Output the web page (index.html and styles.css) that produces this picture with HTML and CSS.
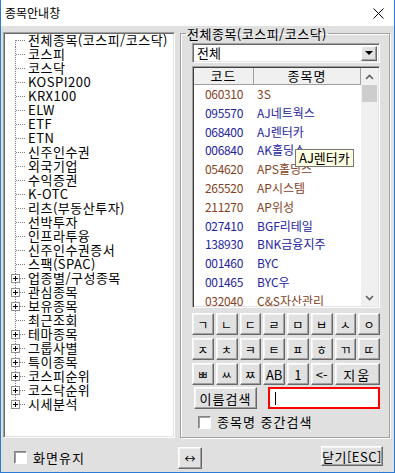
FILE: index.html
```html
<!DOCTYPE html>
<html lang="ko">
<head>
  <meta charset="UTF-8" />
  <title>종목안내창</title>
  <link rel="stylesheet" href="styles.css">
</head>
<body>
  <div class="window">
    <div class="titlebar">
      <span class="title">종목안내창</span>
      <svg class="close-x" width="11" height="11" viewBox="0 0 11 11">
        <path d="M0.5 0.5L10.5 10.5M10.5 0.5L0.5 10.5" stroke="#000" stroke-width="1" fill="none"/>
      </svg>
    </div>

    <div class="main">
      <ul class="tree">
        <li class="first"><span class="gutter"></span>전체종목(코스피/코스닥)</li>
        <li><span class="gutter"></span>코스피</li>
        <li><span class="gutter"></span>코스닥</li>
        <li><span class="gutter"></span>KOSPI200</li>
        <li><span class="gutter"></span>KRX100</li>
        <li><span class="gutter"></span>ELW</li>
        <li><span class="gutter"></span>ETF</li>
        <li><span class="gutter"></span>ETN</li>
        <li><span class="gutter"></span>신주인수권</li>
        <li><span class="gutter"></span>외국기업</li>
        <li><span class="gutter"></span>수익증권</li>
        <li><span class="gutter"></span>K-OTC</li>
        <li><span class="gutter"></span>리츠(부동산투자)</li>
        <li><span class="gutter"></span>선박투자</li>
        <li><span class="gutter"></span>인프라투융</li>
        <li><span class="gutter"></span>신주인수권증서</li>
        <li><span class="gutter"></span>스팩(SPAC)</li>
        <li><span class="gutter"><span class="plus"></span></span>업종별/구성종목</li>
        <li><span class="gutter"><span class="plus"></span></span>관심종목</li>
        <li><span class="gutter"><span class="plus"></span></span>보유종목</li>
        <li><span class="gutter"></span>최근조회</li>
        <li><span class="gutter"><span class="plus"></span></span>테마종목</li>
        <li><span class="gutter"><span class="plus"></span></span>그룹사별</li>
        <li><span class="gutter"><span class="plus"></span></span>특이종목</li>
        <li><span class="gutter"><span class="plus"></span></span>코스피순위</li>
        <li><span class="gutter"><span class="plus"></span></span>코스닥순위</li>
        <li class="last"><span class="gutter"><span class="plus"></span></span>시세분석</li>
      </ul>

      <fieldset class="group">
        <legend>전체종목(코스피/코스닥)</legend>

        <div class="combo">
          <span class="combo-text">전체</span>
          <span class="drop"><span class="tri"></span></span>
        </div>

        <div class="list">
          <div class="grid">
            <div class="head"><span class="col-code">코드</span><span class="col-name">종목명</span></div>
            <div class="rows">
              <div class="row brown"><span class="col-code">060310</span><span class="col-name">3S</span></div>
              <div class="row blue"><span class="col-code">095570</span><span class="col-name">AJ네트웍스</span></div>
              <div class="row blue"><span class="col-code">068400</span><span class="col-name">AJ렌터카</span></div>
              <div class="row blue"><span class="col-code">006840</span><span class="col-name">AK홀딩스</span></div>
              <div class="row brown"><span class="col-code">054620</span><span class="col-name">APS홀딩스</span></div>
              <div class="row brown"><span class="col-code">265520</span><span class="col-name">AP시스템</span></div>
              <div class="row brown"><span class="col-code">211270</span><span class="col-name">AP위성</span></div>
              <div class="row blue"><span class="col-code">027410</span><span class="col-name">BGF리테일</span></div>
              <div class="row blue"><span class="col-code">138930</span><span class="col-name">BNK금융지주</span></div>
              <div class="row blue"><span class="col-code">001460</span><span class="col-name">BYC</span></div>
              <div class="row blue"><span class="col-code">001465</span><span class="col-name">BYC우</span></div>
              <div class="row brown"><span class="col-code">032040</span><span class="col-name">C&amp;S자산관리</span></div>
            </div>
          </div>
          <div class="scrollbar">
            <div class="sb-btn">
              <svg width="9" height="6" viewBox="0 0 9 6"><path d="M1 5L4.5 1.5L8 5" stroke="#606060" stroke-width="1.6" fill="none"/></svg>
            </div>
            <div class="sb-thumb"></div>
            <div class="sb-track"></div>
            <div class="sb-btn">
              <svg width="9" height="6" viewBox="0 0 9 6"><path d="M1 1L4.5 4.5L8 1" stroke="#606060" stroke-width="1.6" fill="none"/></svg>
            </div>
          </div>
          <div class="tooltip">AJ렌터카</div>
        </div>

        <div class="keys">
          <button class="key">ㄱ</button>
          <button class="key">ㄴ</button>
          <button class="key">ㄷ</button>
          <button class="key">ㄹ</button>
          <button class="key">ㅁ</button>
          <button class="key">ㅂ</button>
          <button class="key">ㅅ</button>
          <button class="key">ㅇ</button>
          <button class="key">ㅈ</button>
          <button class="key">ㅊ</button>
          <button class="key">ㅋ</button>
          <button class="key">ㅌ</button>
          <button class="key">ㅍ</button>
          <button class="key">ㅎ</button>
          <button class="key">ㄲ</button>
          <button class="key">ㄸ</button>
          <button class="key">ㅃ</button>
          <button class="key">ㅆ</button>
          <button class="key">ㅉ</button>
          <button class="key latin">AB</button>
          <button class="key latin">1</button>
          <button class="key latin">&lt;-</button>
          <button class="key wide">지움</button>
        </div>

        <div class="search">
          <button class="btn name-btn">이름검색</button>
          <div class="search-input"><span class="caret"></span></div>
        </div>

        <label class="check mid-check"><span class="box"></span>종목명 중간검색</label>
      </fieldset>
    </div>

    <div class="bottom">
      <label class="check keep"><span class="box"></span>화면유지</label>
      <button class="btn swap">↔</button>
      <button class="btn close-btn">닫기[ESC]</button>
    </div>
  </div>
</body>
</html>
```

FILE: styles.css
```css
* {
  box-sizing: border-box;
}

body {
  margin: 0;
  font-family: "Noto Sans CJK KR", "Noto Sans", sans-serif;
  font-size: 12px;
  color: #000;
  background: #e0e0e0;
}

.window {
  width: 395px;
  height: 473px;
  border: 1px solid #2b7bd4;
  border-top: 0;
  background: #e0e0e0;
  display: flex;
  flex-direction: column;
}

.titlebar {
  height: 26px;
  flex: none;
  background: #fff;
  display: flex;
  align-items: center;
  justify-content: space-between;
  padding: 0 10px 0 4px;
}

.title {
  font-size: 12px;
  line-height: 14px;
}

/* main area: tree + group box */
.main {
  display: flex;
  align-items: flex-start;
  gap: 5px;
  padding: 1px 0 0 2px;
  height: 412px;
  flex: none;
}

.tree {
  list-style: none;
  margin: 5px 0 0;
  padding: 1px 0 0;
  width: 172px;
  height: 406px;
  background: #fff;
  border: 1px solid;
  border-color: #a0a0a0 #fff #fff #a0a0a0;
  box-shadow: inset 1px 1px #696969, inset -1px -1px #e3e3e3;
}

.tree li {
  display: flex;
  align-items: center;
  height: 14px;
  line-height: 14px;
  font-size: 13px;
  white-space: nowrap;
  letter-spacing: 0.5px;
}

.tree li:first-child {
  margin-top: -1px;
}

.gutter {
  flex: none;
  width: 24px;
  height: 14px;
  display: flex;
  align-items: center;
  background:
    repeating-linear-gradient(to right, #808080 0 1px, transparent 1px 2px) 12px 7px / 9px 1px no-repeat,
    repeating-linear-gradient(to bottom, #808080 0 1px, transparent 1px 2px) 11px 0 / 1px 14px no-repeat;
}

.tree li.first .gutter {
  background:
    repeating-linear-gradient(to right, #808080 0 1px, transparent 1px 2px) 12px 7px / 9px 1px no-repeat,
    repeating-linear-gradient(to bottom, #808080 0 1px, transparent 1px 2px) 11px 7px / 1px 7px no-repeat;
}

.tree li.last .gutter {
  background:
    repeating-linear-gradient(to right, #808080 0 1px, transparent 1px 2px) 12px 7px / 9px 1px no-repeat,
    repeating-linear-gradient(to bottom, #808080 0 1px, transparent 1px 2px) 11px 0 / 1px 7px no-repeat;
}

.plus {
  width: 9px;
  height: 9px;
  margin-left: 7px;
  border: 1px solid #919191;
  background:
    linear-gradient(#000, #000) 1px 3px / 5px 1px no-repeat,
    linear-gradient(#000, #000) 3px 1px / 1px 5px no-repeat,
    #fff;
}

/* group box */
.group {
  width: 210px;
  height: 411px;
  margin: 0;
  min-width: 0;
  padding: 3px 9px 0 11px;
  border: 1px solid #a0a0a0;
  box-shadow: inset 1px 1px #fff, 1px 1px #fff;
  display: flex;
  flex-direction: column;
}

.group legend {
  margin-left: -6px;
  padding: 0 1px;
  font-size: 13px;
  line-height: 13px;
  letter-spacing: 0.5px;
}

.combo {
  height: 20px;
  flex: none;
  display: flex;
  align-items: center;
  justify-content: space-between;
  background: #fff;
  border: 1px solid;
  border-color: #a0a0a0 #fff #fff #a0a0a0;
  box-shadow: inset 1px 1px #696969, inset -1px -1px #e3e3e3;
  padding: 0 2px 0 4px;
}

.combo-text {
  font-size: 13px;
  line-height: 14px;
}

.drop {
  width: 16px;
  height: 15px;
  display: flex;
  align-items: center;
  justify-content: center;
  background: #e1e1e1;
  border: 1px solid;
  border-color: #fff #696969 #696969 #fff;
  box-shadow: inset -1px -1px #a0a0a0;
}

.tri {
  width: 0;
  height: 0;
  border-left: 4px solid transparent;
  border-right: 4px solid transparent;
  border-top: 4px solid #000;
}

/* list */
.list {
  position: relative;
  margin-top: 3px;
  height: 242px;
  flex: none;
  display: flex;
  background: #fff;
  border: 1px solid;
  border-color: #a0a0a0 #fff #fff #a0a0a0;
  box-shadow: inset 1px 1px #404040, inset -1px -1px #e3e3e3;
  padding: 1px;
}

.grid {
  flex: 1;
  display: flex;
  flex-direction: column;
}

.head {
  display: flex;
  flex: none;
  height: 17px;
  line-height: 16px;
  font-size: 13px;
  background: #f0f0f0;
}

.head span {
  text-align: center;
  border-right: 1px solid #a0a0a0;
  border-bottom: 1px solid #a0a0a0;
  letter-spacing: 1px;
}

.rows {
  flex: 1;
  overflow: hidden;
}

.col-code {
  width: 60px;
  flex: none;
}

.col-name {
  flex: 1;
}

.row {
  display: flex;
  height: 18.8px;
  line-height: 18.8px;
  font-size: 12px;
}

.row .col-code {
  text-align: center;
  letter-spacing: -0.3px;
}

.row .col-name {
  padding-left: 3px;
}

.brown {
  color: #843f1e;
}

.blue {
  color: #2424a0;
}

.scrollbar {
  width: 17px;
  flex: none;
  display: flex;
  flex-direction: column;
  background: #f0f0f0;
}

.sb-btn {
  height: 17px;
  flex: none;
  display: flex;
  align-items: center;
  justify-content: center;
}

.sb-thumb {
  height: 17px;
  margin: 0 1px;
  background: #cdcdcd;
}

.sb-track {
  flex: 1;
}

.tooltip {
  position: absolute;
  left: 102px;
  top: 82px;
  height: 18px;
  padding: 0 3px;
  background: #ffffe1;
  border: 1px solid #767676;
  font-size: 13px;
  line-height: 16px;
  color: #000;
  white-space: nowrap;
}

/* buttons */
.btn,
.key {
  font-family: inherit;
  color: #000;
  padding: 0;
  margin: 0;
  background: #e1e1e1;
  border: 1px solid;
  border-color: #fff #696969 #696969 #fff;
  box-shadow: inset -1px -1px #a0a0a0, inset 1px 1px #f4f4f4;
  display: flex;
  align-items: center;
  justify-content: center;
}

.keys {
  margin-top: 5px;
  display: grid;
  grid-template-columns: repeat(8, 1fr);
  grid-auto-rows: 22px;
  gap: 3px 2px;
}

.key {
  font-size: 12px;
}

.key.latin {
  font-size: 13px;
}

.key.wide {
  grid-column: span 2;
  font-size: 13px;
  letter-spacing: 2px;
}

.search {
  margin-top: 2px;
  height: 22px;
  display: flex;
}

.name-btn {
  width: 63px;
  height: 22px;
  margin-left: 2px;
  font-size: 13px;
  letter-spacing: 1px;
}

.search-input {
  margin-left: auto;
  width: 112px;
  height: 22px;
  border: 2px solid #f00;
  background: #fff;
  padding: 3px 0 0 5px;
}

.caret {
  display: block;
  width: 1px;
  height: 13px;
  background: #000;
}

.check {
  display: flex;
  align-items: center;
  gap: 6px;
  font-size: 13px;
  line-height: 14px;
  letter-spacing: 1px;
}

.box {
  width: 13px;
  height: 13px;
  flex: none;
  background: #fff;
  border: 1px solid;
  border-color: #848484 #fff #fff #848484;
  box-shadow: inset 1px 1px #a0a0a0;
}

.mid-check {
  margin-top: 6px;
  margin-left: 6px;
  height: 14px;
}

/* bottom bar */
.bottom {
  flex: 1;
  display: flex;
  align-items: flex-start;
  padding-left: 13px;
}

.keep {
  width: 164px;
  margin-top: 13px;
  height: 13px;
}

.swap {
  margin-top: 9px;
  width: 24px;
  height: 22px;
  font-size: 11px;
}

.close-btn {
  margin-top: 8px;
  margin-left: auto;
  margin-right: 11px;
  width: 62px;
  height: 20px;
  font-size: 13px;
  letter-spacing: 0.5px;
}
```
